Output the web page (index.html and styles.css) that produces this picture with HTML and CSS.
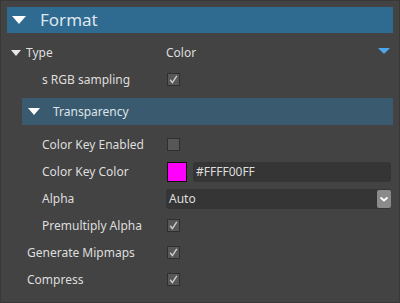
FILE: index.html
```html
<!DOCTYPE html>
<html>
<head>
<meta charset="utf-8">
<link rel="stylesheet" href="styles.css">
</head>
<body>
<div class="panel">
  <div class="header">
    <span class="tri tri-lg"></span>
    <span class="header-title">Format</span>
  </div>
  <div class="row lvl0">
    <div class="label"><span class="tri tri-sm"></span><span>Type</span></div>
    <div class="value value-type"><span>Color</span><span class="tri-blue"></span></div>
  </div>
  <div class="row lvl2">
    <div class="label">s RGB sampling</div>
    <div class="value"><span class="check on"><svg viewBox="0 0 13 13" width="13" height="13"><path d="M3.2 6.8 L5.4 9.6 L9.8 2.8" fill="none" stroke="#cfcfcf" stroke-width="1.4"/></svg></span></div>
  </div>
  <div class="subheader">
    <span class="tri tri-md"></span>
    <span class="sub-title">Transparency</span>
  </div>
  <div class="row lvl2">
    <div class="label">Color Key Enabled</div>
    <div class="value"><span class="check"></span></div>
  </div>
  <div class="row lvl2">
    <div class="label">Color Key Color</div>
    <div class="value value-color">
      <span class="swatch"></span>
      <span class="field">#FFFF00FF</span>
    </div>
  </div>
  <div class="row lvl2">
    <div class="label">Alpha</div>
    <div class="value">
      <div class="select">
        <span>Auto</span>
        <span class="select-btn"><svg viewBox="0 0 14 18" width="14" height="18"><path d="M3.5 7.5 L7 10.5 L10.5 7.5" fill="none" stroke="#ffffff" stroke-width="2"/></svg></span>
      </div>
    </div>
  </div>
  <div class="row lvl2">
    <div class="label">Premultiply Alpha</div>
    <div class="value"><span class="check on"><svg viewBox="0 0 13 13" width="13" height="13"><path d="M3.2 6.8 L5.4 9.6 L9.8 2.8" fill="none" stroke="#cfcfcf" stroke-width="1.4"/></svg></span></div>
  </div>
  <div class="row lvl1">
    <div class="label">Generate Mipmaps</div>
    <div class="value"><span class="check on"><svg viewBox="0 0 13 13" width="13" height="13"><path d="M3.2 6.8 L5.4 9.6 L9.8 2.8" fill="none" stroke="#cfcfcf" stroke-width="1.4"/></svg></span></div>
  </div>
  <div class="row lvl1">
    <div class="label">Compress</div>
    <div class="value"><span class="check on"><svg viewBox="0 0 13 13" width="13" height="13"><path d="M3.2 6.8 L5.4 9.6 L9.8 2.8" fill="none" stroke="#cfcfcf" stroke-width="1.4"/></svg></span></div>
  </div>
</div>
</body>
</html>
```

FILE: styles.css
```css
* { box-sizing: border-box; }
html, body {
  margin: 0;
  padding: 0;
  background: #434343;
}
body {
  width: 400px;
  height: 303px;
  overflow: hidden;
  font-family: "Noto Sans", "Open Sans", sans-serif;
  font-size: 12px;
  color: #dedede;
}
.panel {
  width: 400px;
  height: 303px;
  border: 1px solid #383838;
  padding: 6px 6px 0 6px;
  display: flex;
  flex-direction: column;
}
.header {
  height: 26px;
  background: #2f6a91;
  display: flex;
  align-items: center;
  padding-left: 5px;
  margin-bottom: 6px;
}
.header-title {
  font-size: 17px;
  color: #dfe6ee;
  margin-left: 14px;
  line-height: 1;
  padding-bottom: 1px;
}
.tri {
  display: inline-block;
  width: 0;
  height: 0;
  border-style: solid;
  border-color: #ffffff transparent transparent transparent;
}
.tri-lg { border-width: 8px 7px 0 7px; }
.tri-md { border-width: 7px 6.5px 0 6.5px; }
.tri-sm { border-width: 6px 5.5px 0 5.5px; border-top-color: #e8e8e8; }
.row {
  height: 27px;
  display: flex;
  align-items: center;
  flex: none;
}
.label {
  width: 159px;
  display: flex;
  align-items: center;
  flex: none;
}
.lvl0 .label { padding-left: 4px; }
.lvl0 .label .tri { margin-right: 5px; }
.lvl1 .label { padding-left: 20px; }
.lvl2 .label { padding-left: 35px; }
.value {
  flex: 1;
  display: flex;
  align-items: center;
  padding-right: 2px;
}
.value-type {
  justify-content: space-between;
  padding-right: 3px;
}
.tri-blue {
  width: 0;
  height: 0;
  border-style: solid;
  border-width: 6px 6.5px 0 6.5px;
  border-color: #4aa6e8 transparent transparent transparent;
  margin-top: -3px;
}
.check {
  width: 13px;
  height: 13px;
  margin-left: 1px;
  background: #575757;
  border: 1px solid #2f2f2f;
  display: flex;
  align-items: center;
  justify-content: center;
  position: relative;
}
.check svg {
  position: absolute;
  left: -1px;
  top: -1px;
}
.subheader {
  height: 27px;
  margin: 5px 0 6px 15px;
  background: #3a5a6f;
  display: flex;
  align-items: center;
  padding-left: 6px;
  flex: none;
}
.sub-title {
  margin-left: 13px;
  color: #dde4ea;
}
.value-color { gap: 6px; }
.swatch {
  width: 20px;
  height: 20px;
  margin-left: 1px;
  background: #ff00ff;
  border: 1px solid #111111;
  flex: none;
}
.field {
  flex: 1;
  height: 20px;
  background: #353535;
  border-radius: 3px;
  display: flex;
  align-items: center;
  padding-left: 3px;
}
.select {
  flex: 1;
  height: 20px;
  background: #353535;
  border-radius: 3px;
  display: flex;
  align-items: center;
  justify-content: space-between;
  padding-left: 3px;
}
.select-btn {
  width: 14px;
  height: 18px;
  background: #8a8a8a;
  border-radius: 2px;
  display: flex;
}
```
